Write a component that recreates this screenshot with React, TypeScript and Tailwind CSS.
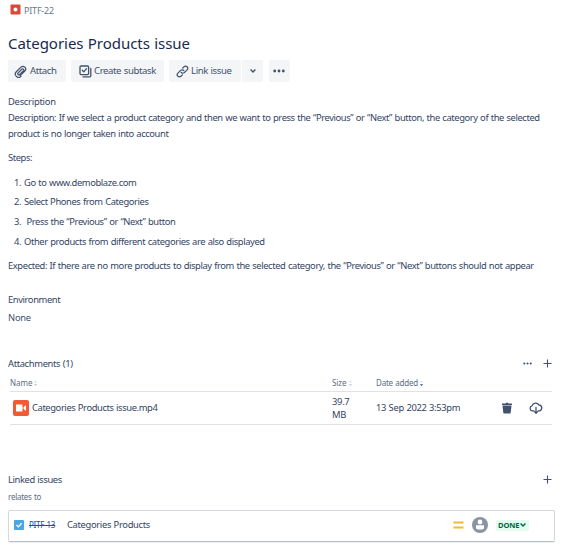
import type { ReactNode } from "react";

const steps = [
  "Go to www.demoblaze.com",
  "Select Phones from Categories",
  "\u00a0Press the “Previous” or “Next” button",
  "Other products from different categories are also displayed",
];

function ToolButton({ children, className }: { children: ReactNode; className: string }) {
  return (
    <button className={`flex h-[22px] items-center rounded-[2px] bg-[#f4f5f7] text-[9.6px] tracking-[-0.4px] [word-spacing:0.5px] text-[#42526e] ${className}`}>
      {children}
    </button>
  );
}

function Paperclip() {
  return (
    <svg className="shrink-0" width="13" height="13" viewBox="0 0 24 24" fill="none" stroke="#42526e" strokeWidth="2.3" strokeLinecap="round">
      <path d="M11.5 19.6 20 11a5 5 0 0 0-7.1-7.1L4.3 12.5a6 6 0 0 0 8.5 8.5M6.8 15.5l8-8a2 2 0 0 1 2.8 2.8l-7.5 7.5a2 2 0 0 1-2.8-2.8l5.5-5.5" />
    </svg>
  );
}

function Subtask() {
  return (
    <svg className="shrink-0" width="13" height="13" viewBox="0 0 13 13" fill="none" stroke="#42526e" strokeWidth="1.3" strokeLinecap="round" strokeLinejoin="round">
      <rect x="1" y="1" width="8.6" height="8.6" rx="1" />
      <path d="m3.3 5.3 1.5 1.6 2.7-3.2M11.8 3.5v7.3a1 1 0 0 1-1 1H4" />
    </svg>
  );
}

function LinkIcon() {
  return (
    <svg className="shrink-0" width="13" height="13" viewBox="0 0 24 24" fill="none" stroke="#42526e" strokeWidth="2.3" strokeLinecap="round" strokeLinejoin="round">
      <path d="M9.5 13.5a4 4 0 0 0 6 .5l5-5a4 4 0 0 0-5.7-5.7L12.5 5.5M14.5 10.5a4 4 0 0 0-6-.5l-5 5a4 4 0 0 0 5.7 5.7l2.3-2.2" />
    </svg>
  );
}

function Dots({ className }: { className: string }) {
  return (
    <svg className={className} viewBox="0 0 12 4" fill="#42526e">
      <circle cx="1.7" cy="2" r="1.4" />
      <circle cx="6" cy="2" r="1.4" />
      <circle cx="10.3" cy="2" r="1.4" />
    </svg>
  );
}

function Plus() {
  return (
    <svg width="9" height="9" viewBox="0 0 9 9" stroke="#42526e" strokeWidth="1.1">
      <path d="M4.5.5v8M.5 4.5h8" />
    </svg>
  );
}

function SortMark({ active = false }: { active?: boolean }) {
  return (
    <svg width="5" height="7" viewBox="0 0 5 7">
      <path d="M1.2 2.2 2.5.9l1.3 1.3z" fill="#c1c7d0" />
      <path d="M.7 4.3h3.6L2.5 6.1z" fill={active ? "#42526e" : "#c1c7d0"} />
    </svg>
  );
}

export default function App() {
  return (
    <main className="h-[548px] w-[581px] overflow-hidden bg-white pl-2 font-['Noto_Sans','Open_Sans',sans-serif] text-[9.4px] leading-4 tracking-[-0.4px] [word-spacing:0.45px] whitespace-nowrap text-[#344563]">
      <div className="flex h-[21px] items-center gap-[3px] pl-[2px]">
        <svg className="mb-[2px]" width="11" height="11" viewBox="0 0 11 11">
          <rect x=".5" y=".5" width="10" height="10" rx="1" fill="#d9483b" />
          <circle cx="5.5" cy="5.5" r="2" fill="#fff" />
        </svg>
        <span className="text-[9px] tracking-[-0.2px] text-[#6b778c]">PITF-22</span>
      </div>

      <h1 className="mt-[11px] h-[22px] text-[15px] leading-[22px] tracking-[-0.03px] text-[#172b4d]">Categories Products issue</h1>

      <div className="mt-[6px] flex">
        <ToolButton className="w-[58px] gap-[3px] pl-[6px]">
          <Paperclip />
          <span>Attach</span>
        </ToolButton>
        <ToolButton className="ml-[5px] w-[93px] gap-[2px] pl-[8px]">
          <Subtask />
          <span>Create subtask</span>
        </ToolButton>
        <ToolButton className="ml-[5px] w-[72px] gap-[2px] pl-[7px]">
          <LinkIcon />
          <span>Link issue</span>
        </ToolButton>
        <ToolButton className="ml-px w-[21px] justify-center">
          <svg width="6" height="4" viewBox="0 0 6 4" fill="none" stroke="#42526e" strokeWidth="1.4">
            <path d="m.6.6 2.4 2.4L5.4.6" />
          </svg>
        </ToolButton>
        <ToolButton className="ml-[6px] w-[21px] justify-center">
          <Dots className="mr-px h-[4px] w-[12px]" />
        </ToolButton>
      </div>

      <h2 className="mt-[12px] tracking-[-0.25px]">Description</h2>
      <p>
        Description: If we select a product category and then we want to press the “Previous” or “Next” button, the category of the selected
        <br />
        product is no longer taken into account
      </p>
      <p className="mt-2">Steps:</p>
      <ol className="mt-[7px]">
        {steps.map((step, i) => (
          <li key={i} className="flex h-[19.6px] items-center">
            <span className="w-[16px] pl-[6px]">{i + 1}.</span>
            <span>{step}</span>
          </li>
        ))}
      </ol>
      <p className="mt-[7px]">
        Expected: If there are no more products to display from the selected category, the “Previous” or “Next” buttons should not appear
      </p>

      <h2 className="mt-[18px]">Environment</h2>
      <p className="mt-[2px] tracking-[-0.25px] text-[#42526e]">None</p>

      <div className="mt-[30px] flex w-[543.5px] items-center justify-between">
        <h2 className="tracking-[-0.35px]">Attachments (1)</h2>
        <div className="flex items-center gap-[11px] pb-px">
          <Dots className="h-[3px] w-[9px]" />
          <Plus />
        </div>
      </div>

      <div className="ml-[2px] w-[542px]">
        <div className="mt-[4px] flex h-[16px] items-center border-b border-[#dfe1e6] pb-[1px] text-[8px] tracking-[-0.05px] text-[#5e6c84]">
          <div className="flex w-[322px] items-center gap-[1px]">Name<SortMark /></div>
          <div className="flex w-[44px] items-center gap-[1px]">Size<SortMark /></div>
          <div className="flex items-center gap-[1px] tracking-[-0.2px]">Date added<SortMark active /></div>
        </div>
        <div className="flex h-[33px] items-center border-b border-[#dfe1e6]">
          <div className="flex w-[322px] items-center gap-[3px] pl-[3px]">
            <svg width="16" height="16" viewBox="0 0 16 16">
              <rect width="16" height="16" rx="2" fill="#f15a33" />
              <path d="M3 4.5h6.5v7H3zM10.5 7.3 13 5v6l-2.5-2.3z" fill="#fff" />
            </svg>
            <span>Categories Products issue.mp4</span>
          </div>
          <div className="w-[44px] leading-[13px] tracking-[-0.3px]">39.7<br />MB</div>
          <div className="w-[125px] tracking-[-0.33px]">13 Sep 2022 3:53pm</div>
          <svg width="12" height="12" viewBox="0 0 12 12" fill="#42526e">
            <path d="M1 1.5h3.5l.5-.7h2l.5.7H11V3H1zM1.5 3.5h9l-.8 7.2a.8.8 0 0 1-.8.8H3.1a.8.8 0 0 1-.8-.8z" />
          </svg>
          <svg className="ml-[16px]" width="14" height="12" viewBox="0 0 14 12" fill="none" stroke="#42526e" strokeWidth="1.3" strokeLinecap="round" strokeLinejoin="round">
            <path d="M4.8 8.8H3.3A2.5 2.5 0 0 1 3 3.9 3.8 3.8 0 0 1 10 3a3 3 0 0 1 .8 5.8H9.2M7 5.5v5.5M5.4 9.6 7 11.2l1.6-1.6" />
          </svg>
        </div>
      </div>

      <div className="mt-[47px] flex w-[543.5px] items-center justify-between">
        <h2>Linked issues</h2>
        <div className="pb-px">
          <Plus />
        </div>
      </div>
      <p className="mt-[1px] text-[8px] tracking-[-0.25px] text-[#5e6c84]">relates to</p>

      <div className="mt-[5px] flex h-[32px] w-[547px] items-center rounded-[2px] border border-[#d5d8de] border-b-[#b8bec8] pb-[2px] pl-[5px] shadow-[0_1px_1px_rgba(9,30,66,0.08)]">
        <svg width="10" height="10" viewBox="0 0 10 10">
          <rect width="10" height="10" rx="1" fill="#4aa8dc" />
          <path d="m2.5 5 1.8 1.9L7.6 3.3" fill="none" stroke="#fff" strokeWidth="1.3" />
        </svg>
        <span className="ml-[5px] w-[38px] text-[8px] tracking-[-0.25px] text-[#0052cc] line-through">PITF-13</span>
        <span className="tracking-[-0.33px]">Categories Products</span>
        <svg className="ml-auto" width="11" height="8" viewBox="0 0 11 8" fill="#f5b82e">
          <path d="M.5.5h10v2H.5zM.5 5.5h10v2H.5z" />
        </svg>
        <svg className="ml-[8px]" width="16" height="16" viewBox="0 0 16 16">
          <circle cx="8" cy="8" r="8" fill="#8993a4" />
          <circle cx="8" cy="5" r="2.4" fill="#fff" />
          <path d="M4 8.3h8v2.3a2 2 0 0 1-2 2H6a2 2 0 0 1-2-2z" fill="#fff" />
        </svg>
        <div className="mr-[25px] ml-[8px] flex h-[11px] w-[33px] items-center gap-[1px] rounded-[2px] bg-[#e3fcef] pl-[2px] text-[7.5px] font-bold tracking-[-0.1px] text-[#006644]">
          DONE
          <svg width="6" height="4" viewBox="0 0 6 4" fill="none" stroke="#006644" strokeWidth="1.4">
            <path d="m.6.6 2.4 2.4L5.4.6" />
          </svg>
        </div>
      </div>
    </main>
  );
}
